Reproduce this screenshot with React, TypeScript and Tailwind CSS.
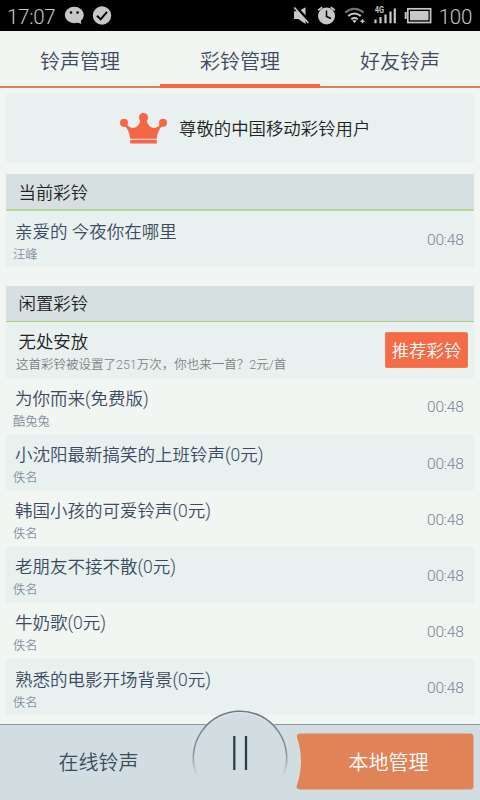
const tabs = ["铃声管理", "彩铃管理", "好友铃声"];

const idleTones = [
    { title: "为你而来(免费版)", artist: "酷兔兔", time: "00:48" },
    { title: "小沈阳最新搞笑的上班铃声(0元)", artist: "佚名", time: "00:48" },
    { title: "韩国小孩的可爱铃声(0元)", artist: "佚名", time: "00:48" },
    { title: "老朋友不接不散(0元)", artist: "佚名", time: "00:48" },
    { title: "牛奶歌(0元)", artist: "佚名", time: "00:48" },
    { title: "熟悉的电影开场背景(0元)", artist: "佚名", time: "00:48" },
];

const StatusBar = () => (
    <header className="flex h-[31px] shrink-0 items-center bg-black pl-[7px] pr-2 text-[#c8c8c8]">
        <span className="w-[57px] pt-[3px] text-[20.5px] leading-none font-light tracking-[-0.3px]">17:07</span>
        <svg className="h-[31px] w-[50px]" viewBox="64 0 50 31">
            <ellipse cx="74.3" cy="15" rx="9.5" ry="8.2" fill="#c8c8c8" />
            <path d="M76 22l5.3 2-.8-5z" fill="#c8c8c8" />
            <circle cx="71" cy="12.5" r="1.3" />
            <circle cx="77.6" cy="12.5" r="1.3" />
            <circle cx="102" cy="15.5" r="9.2" fill="#c8c8c8" />
            <path d="M97 15.8l3.7 3.5 6.3-7.4" fill="none" stroke="#000" strokeWidth="2" />
        </svg>
        <svg className="ml-auto h-[31px] w-[145px]" viewBox="289 0 145 31" fill="none" stroke="#c8c8c8">
            {/* muted speaker */}
            <path d="M294 11.3h4.3l7.2-4v16.7l-7.2-5H294z" fill="#c8c8c8" stroke="none" />
            <path d="M295.4 6.3l14 15.7" stroke="#000" strokeWidth="3" />
            <path d="M294.3 7.5l14 15.5" strokeWidth="1.7" />
            {/* alarm clock */}
            <circle cx="326.5" cy="16" r="8.5" fill="#c8c8c8" stroke="none" />
            <path d="M318.2 10.2l4-3M334.8 10.2l-4-3" strokeWidth="1.8" />
            <path d="M326.5 10.5v6l4.5 2" stroke="#000" strokeWidth="1.5" />
            {/* wifi */}
            <path d="M345.2 12.5q9.2-7.5 18.5 0" stroke="#777" strokeWidth="1.9" />
            <path d="M348.2 16q6.3-5 12.6 0M351.3 19.3q3.2-2.5 6.4 0" strokeWidth="2" />
            <path d="M352.3 20.6q2.1-1.2 4.3 0l-2.1 2.6z" fill="#c8c8c8" stroke="none" />
            <path d="M360.5 21.3h4M362.5 19.3v4" strokeWidth="1.5" />
            {/* signal */}
            <path d="M375.5 19.5v3.8M380.5 17v6.3M385.5 14.5v8.8M390.5 11.5v11.8M394.8 8.5v14.8" strokeWidth="2.2" />
            <text x="374.7" y="13.2" fontSize="8.5" fontWeight="700" textLength="9.3" lengthAdjust="spacingAndGlyphs" fill="#c8c8c8" stroke="none">4G</text>
            {/* battery */}
            <rect x="407.8" y="8.8" width="22.8" height="13.7" strokeWidth="1.7" />
            <rect x="410" y="11" width="18.5" height="9.3" fill="#c8c8c8" stroke="none" />
            <path d="M405.7 12v7" strokeWidth="2" />
        </svg>
        <span className="w-[38px] pt-[3px] text-right text-[20.5px] leading-none font-light tracking-[-0.3px] whitespace-nowrap">100</span>
    </header>
);

const Crown = () => (
    <svg className="h-[31px] w-[47px]" viewBox="0 0 47 31" fill="#f66644">
        <circle cx="4" cy="9.7" r="4" />
        <circle cx="23.5" cy="4.6" r="4.6" />
        <circle cx="43" cy="9.7" r="4" />
        <path d="M3.5 12.5c3.5 1.5 6 6.5 6.7 13.3h26.6c.7-6.8 3.2-11.8 6.7-13.3l-2.5-1.5c-3.5 3.5-6.3 4.6-9 3.6-2.900-1-4.900-3.600-5.500-8.100h-6c-.6 4.500-2.600 7.100-5.500 8.100-2.700 1-5.500-.1-9-3.600z" />
        <rect x="10.2" y="26.8" width="26.6" height="3.6" rx=".5" />
    </svg>
);

const ToneRow = ({ title, artist, time, shaded }: { title: string; artist: string; time: string; shaded?: boolean }) => (
    <li className={`flex h-[56.2px] items-center justify-between pr-[10.5px] ${shaded ? "bg-[#e8f1f0]" : ""}`}>
        <div className="pt-[5px] pl-[7px]">
            <p className="pl-[2px] text-[17.5px] leading-[26px] font-[350] text-[#3c4961]">{title}</p>
            <p className="text-[12.3px] leading-5 font-[350] text-[#8790a0]">{artist}</p>
        </div>
        <span className="pt-[4px] text-[15.5px] font-light tracking-[-0.25px] text-[#7b8496]">{time}</span>
    </li>
);

const BottomBar = () => (
    <footer className="relative flex h-[76px] shrink-0 items-center border-t border-[#8b95a0] bg-[#d1dde1]">
        <button className="w-[197px] text-[20px] font-[350] text-[#3c4961]">在线铃声</button>
        <button className="absolute -top-[16px] left-[192px] h-[96px] w-[96px]" aria-label="暂停">
            <svg viewBox="0 0 96 96" fill="none">
                <defs>
                    <linearGradient id="ring" x1="0" y1="0" x2="0" y2="68" gradientUnits="userSpaceOnUse">
                        <stop offset="0" stopColor="#717785" />
                        <stop offset=".65" stopColor="#8c939f" />
                        <stop offset="1" stopColor="#d1dde1" />
                    </linearGradient>
                </defs>
                <circle cx="48" cy="48.5" r="47.3" fill="#d1dde1" />
                <path d="M4.5 66A46.7 46.7 0 1 1 91.5 66" stroke="url(#ring)" strokeWidth="1.6" />
                <path d="M20 13.5A44.8 44.8 0 0 1 76 13.5" stroke="#e2eaed" strokeWidth="1" />
                <path d="M42.3 27v34M54 27v34" stroke="#303b50" strokeWidth="2.3" />
            </svg>
        </button>
        <button className="relative ml-auto mr-[6px] mt-[-1px] h-[57px] w-[178px] text-[20px] font-[350] text-white">
            <svg className="absolute inset-x-0 -top-px h-full w-full" viewBox="0 0 178 57">
                <path d="M4 .5H174q3.5 0 3.5 3.5V53q0 3.5-3.5 3.5H4Q0 56.5 .8 52.5Q9 29 1.2 5Q0 .5 4 .5z" fill="#e08457" />
            </svg>
            <span className="relative top-px pl-[7px]">本地管理</span>
        </button>
    </footer>
);

export default function App() {
    return (
        <div className="flex h-[800px] w-[480px] flex-col overflow-hidden bg-[#f2f6f2] font-[Roboto,'Noto_Sans_CJK_SC',sans-serif]">
            <StatusBar />
            <nav className="grid h-[57px] shrink-0 grid-cols-3">
                {tabs.map((tab, i) => (
                    <button key={tab} className="flex flex-col text-[20px] font-[350] text-[#3c4961]">
                        <span className="flex h-[53px] w-full items-center justify-center pt-[8px]">{tab}</span>
                        <span className={i === 1 ? "h-1 w-full bg-[#f66644]" : "mt-[2px] h-[1.5px] w-full bg-[#cf8856]"} />
                    </button>
                ))}
            </nav>
            <main className="min-h-0 flex-1 overflow-hidden px-[6px] pt-[6px]">
                <section className="flex h-[68px] items-center bg-[#e8f1f0] pl-[114px]">
                    <Crown />
                    <p className="ml-3 pt-[3px] text-[17.4px] font-[350] text-[#222]">尊敬的中国移动彩铃用户</p>
                </section>
                <section className="mt-3">
                    <h2 className="flex h-[37px] items-center border-b-2 border-[#b6d694] bg-[#d6e0e0] pt-[3px] pl-[12.5px] text-[17.4px] font-[350] text-[#222]">
                        当前彩铃
                    </h2>
                    <ul>
                        <ToneRow title="亲爱的 今夜你在哪里" artist="汪峰" time="00:48" shaded />
                    </ul>
                </section>
                <section className="mt-[18.8px]">
                    <h2 className="flex h-9 items-center border-b border-[#a9ce80] bg-[#d6e0e0] pt-[2px] pl-[12.5px] text-[17.4px] font-[350] text-[#222]">
                        闲置彩铃
                    </h2>
                    <div className="flex h-[56px] items-center justify-between bg-[#e8f1f0] pr-[6px]">
                        <div className="pt-[3px] pl-[10px]">
                            <p className="pl-[2.5px] text-[17.4px] leading-[26px] font-[350] text-[#222]">无处安放</p>
                            <p className="text-[12.5px] leading-[19px] font-[350] text-[#808080]">这首彩铃被设置了251万次，你也来一首？2元/首</p>
                        </div>
                        <button className="h-9 w-[83px] rounded-[2px] border border-[#f07c4b] bg-[#f46b47] pt-[2px] text-[17.4px] font-[350] text-white">
                            推荐彩铃
                        </button>
                    </div>
                    <ul>
                        {idleTones.map((tone, i) => (
                            <ToneRow key={tone.title} {...tone} shaded={i % 2 === 1} />
                        ))}
                    </ul>
                </section>
            </main>
            <BottomBar />
        </div>
    );
}
